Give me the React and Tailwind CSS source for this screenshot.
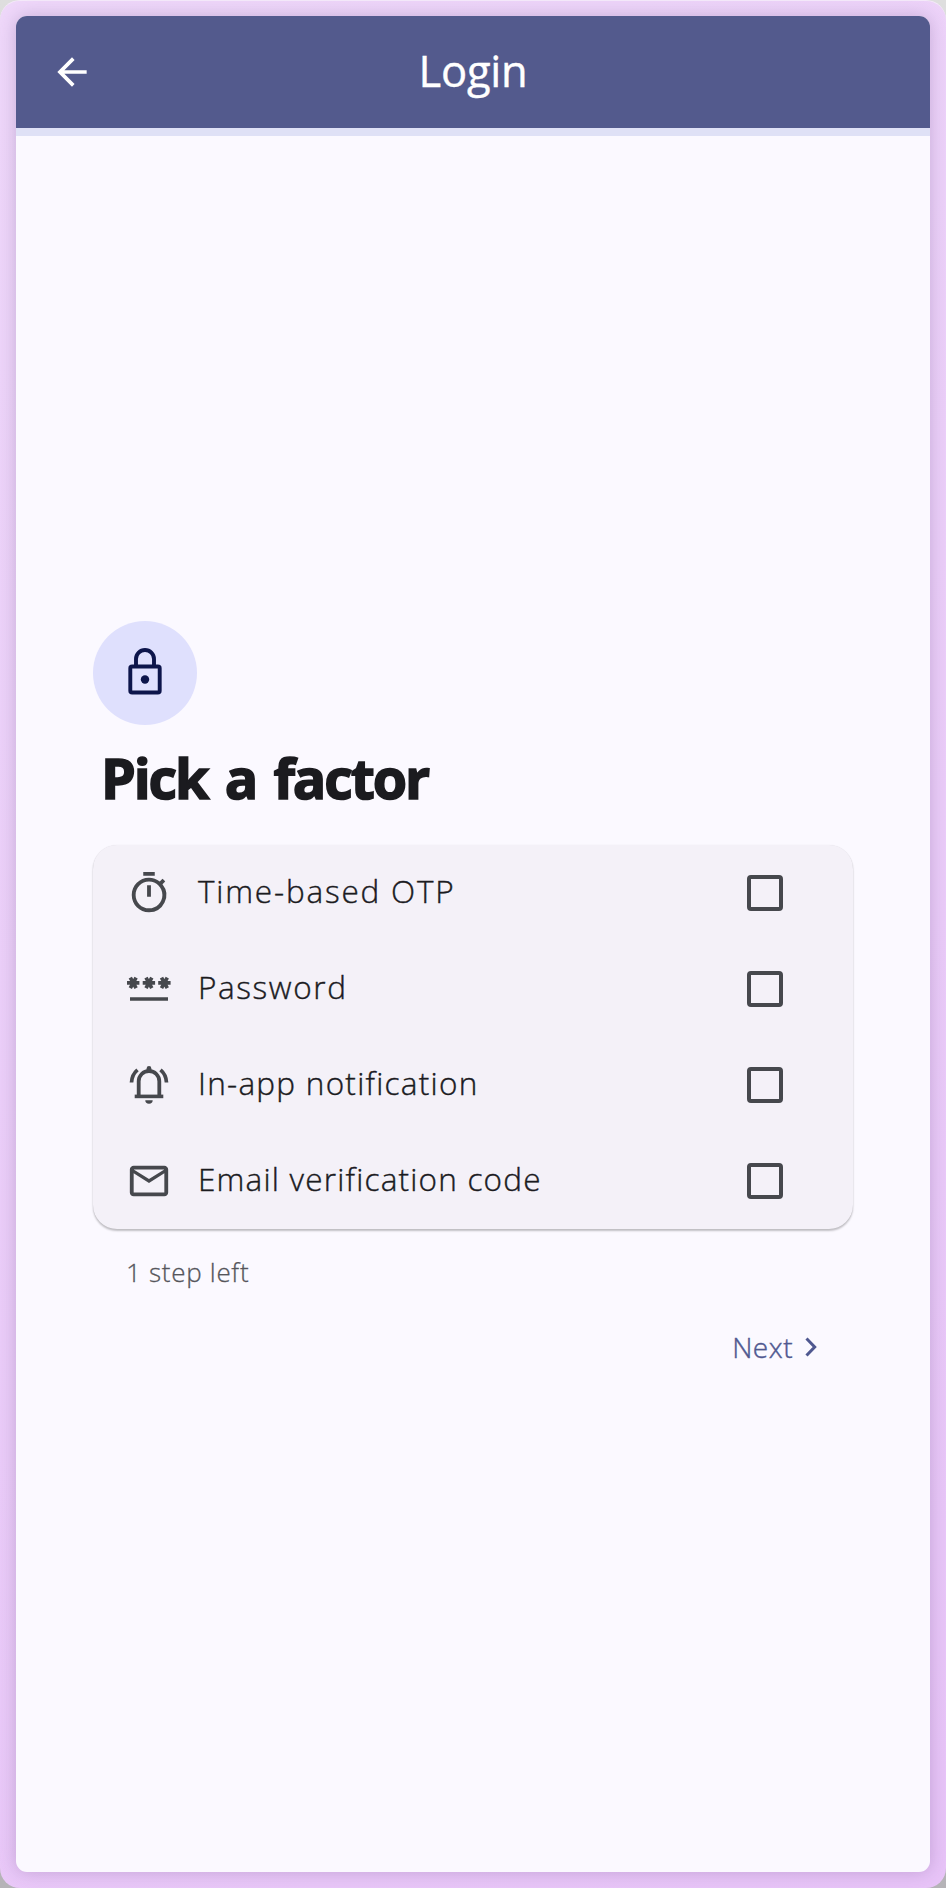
import React from "react";
import { MdOutlineTimer, MdArrowBack, MdMailOutline } from "react-icons/md";

function LockIcon() {
  return (
    <svg width="36" height="50" viewBox="0 0 36 50" fill="none" stroke="#0d154b" strokeWidth="3.9">
      <rect x="3.3" y="18.500" width="29.4" height="26" rx="1.8" />
      <path d="M9 18.500V11a9 9 0 0 1 18 0V18.500" />
      <circle cx="18" cy="31.500" r="4.200" fill="#0d154b" stroke="none" />
    </svg>
  );
}

function BellIcon() {
  return (
    <svg width="46" height="46" viewBox="0 0 46 46" fill="none" stroke="#46484d" strokeWidth="3.8">
      <path d="M12.7 34V19.3a10.3 10.3 0 0 1 20.6 0V34" />
      <path d="M8.7 34.4H37.3" strokeWidth="3.6" />
      <path d="M23 8V6.200" strokeWidth="4.6" strokeLinecap="round" />
      <path d="M5.5 20.5c.2-5.2 2.700-9.900 6-12.700M40.500 20.500c-.2-5.200-2.700-9.900-6-12.700" strokeWidth="3.7" />
      <path d="M19.300 38.300h7.400a3.700 3.400 0 0 1-7.400 0z" fill="#46484d" stroke="none" />
    </svg>
  );
}

function PasswordIcon() {
  return (
    <svg width="46" height="46" viewBox="0 0 46 46" fill="none" stroke="#46484d" strokeWidth="3.700">
      {[7.2, 22.9, 38.4].map((x) => (
        <path key={x} d={`M${x - 6.200} 16.900h12.400M${x - 2.9} 11.600l5.800 10.600M${x + 2.9} 11.600l-5.800 10.600`} />
      ))}
      <path d="M4 33H42" />
    </svg>
  );
}

function Row({ icon, label, textClass }) {
  return (
    <label className="flex h-24 items-center pl-[33px] pr-[70px]">
      <span className="flex w-[46px] justify-center text-[#46484d]">{icon}</span>
      <span className={"ml-[26px] flex-1 whitespace-nowrap pb-[4px] text-[31.5px] font-light leading-[48px] text-[#1b1b1f] [-webkit-text-stroke:0.4px_#1b1b1f] " + textClass}>
        {label}
      </span>
      <span className="size-9 rounded-[4px] border-4 border-[#46484d]" />
    </label>
  );
}

export default function App() {
  return (
    <div className="h-[1888px] w-[946px] bg-[linear-gradient(#dedede,#b5b3b7)] font-['Open_Sans','Noto_Sans',sans-serif]">
      <div className="h-full rounded-[20px] border-t border-[#f5eafa] bg-[linear-gradient(150deg,#efd8fa,#e8c4f8)] px-4 pb-4 pt-[15px]">
        <div className="flex h-full flex-col overflow-hidden rounded-[11px] bg-[#fbf9ff] shadow-[0_0_18px_rgba(80,50,110,0.25)]">
          <header className="grid h-[120px] grid-cols-3 items-center border-b-8 border-[#dfe1f6] bg-[#535a8d] text-white">
            <MdArrowBack className="ml-[34px] size-[44px]" />
            <h1 className="pb-[3px] text-center text-[43.5px] leading-[56px] tracking-[-0.2px] [-webkit-text-stroke:0.4px_white]">Login</h1>
          </header>
          <main className="flex flex-col pl-[77px] pr-[77px] pt-[485px]">
            <div className="flex size-[104px] items-center justify-center rounded-full bg-[#dfe0fd]">
              <LockIcon />
            </div>
            <h2 className="ml-[8px] mt-[13px] whitespace-nowrap text-[55.5px] font-bold leading-[80px] tracking-[-2.1px] text-[#1b1b1f] [word-spacing:5px] [-webkit-text-stroke:1.6px_#1b1b1f]">
              Pick a factor
            </h2>
            <section className="mt-[27px] rounded-[24px] bg-[#f4f1f8] shadow-[0_2px_2px_rgba(0,0,0,0.23),0_0_1px_rgba(0,0,0,0.12)]">
              <Row icon={<MdOutlineTimer className="size-[46px]" />} label="Time-based OTP" textClass="tracking-[1.8px]" />
              <Row icon={<PasswordIcon />} label="Password" textClass="tracking-[1.6px]" />
              <Row icon={<BellIcon />} label="In-app notification" textClass="tracking-[1.25px]" />
              <Row icon={<MdMailOutline className="size-[46px]" />} label="Email verification code" textClass="tracking-[1.2px]" />
            </section>
            <p className="ml-[33px] mt-[23px] text-[26px] font-light leading-[40px] tracking-[0.7px] text-[#55555b] [-webkit-text-stroke:0.3px_#55555b]">1 step left</p>
            <button className="mr-[36px] mt-[35px] flex items-center self-end text-[28px] font-light leading-[40px] tracking-[0.5px] text-[#4f5890] [-webkit-text-stroke:0.4px_#4f5890]">
              Next
              <svg className="ml-3" width="12" height="20" viewBox="0 0 12 20" fill="none" stroke="#4f5890" strokeWidth="3">
                <path d="M1.500 1.500L9.700 10L1.500 18.500" />
              </svg>
            </button>
          </main>
        </div>
      </div>
    </div>
  );
}
